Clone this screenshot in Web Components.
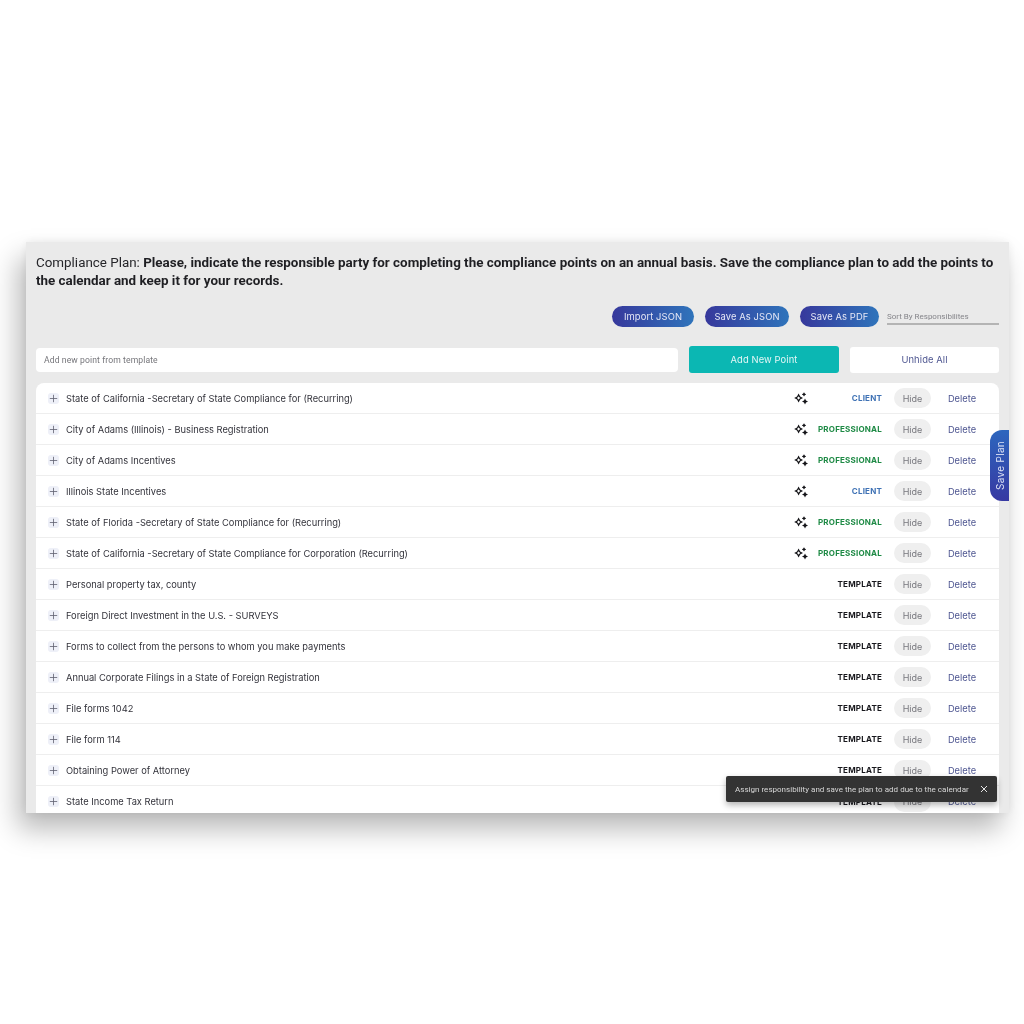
<!DOCTYPE html>
<html lang="en">
<head>
<meta charset="utf-8">
<title>Compliance Plan</title>
<style>
  html, body { margin: 0; background: #fff; }
  body { font-family: "Inter", "Liberation Sans", sans-serif; height: 1024px; overflow: hidden; }
</style>
</head>
<body>
<compliance-plan></compliance-plan>

<script>
"use strict";

(function() {
  const FONT = `"Inter", "Liberation Sans", sans-serif`

  const SPARKLE = `
    <svg width="14" height="14" viewBox="0 0 14 14" aria-hidden="true">
      <path fill-rule="evenodd" fill="#141418" d="M4.6 1.6 L6.2 4.4 L9 6 L6.2 7.6 L4.6 10.4 L3 7.6 L.2 6 L3 4.4 Z M4.6 4.2 L3.9 5.3 L2.8 6 L3.9 6.7 L4.6 7.8 L5.3 6.7 L6.4 6 L5.3 5.3 Z"/>
      <path fill="#141418" d="M10 .2 L10.8 1.6 L12.2 2.4 L10.8 3.2 L10 4.6 L9.2 3.2 L7.8 2.4 L9.2 1.6 Z"/>
      <path fill="#141418" d="M11 6.6 L12 8.6 L14 9.6 L12 10.6 L11 12.6 L10 10.6 L8 9.6 L10 8.6 Z"/>
    </svg>`

  const rowTemplate = document.createElement('template')
  rowTemplate.innerHTML = `
    <style>
      :host { display: flex; align-items: center; height: 31px; box-sizing: border-box; border-bottom: 1px solid #eeeeee; padding: 0 22px 0 12px; font-family: ${FONT}; }
      .plus { width: 11px; height: 11px; border-radius: 3px; background: #eef0f8; display: flex; align-items: center; justify-content: center; margin-right: 7px; flex: none; }
      .title { flex: 1; font-size: 9.3px; color: #33333b; white-space: nowrap; }
      .spark { width: 14px; height: 14px; flex: none; margin: -3px 3px 0 0; }
      .role { width: 71px; padding-right: 1px; text-align: right; font-size: 8px; font-weight: 700; letter-spacing: .2px; white-space: nowrap; }
      .role.client { color: #3f72b5; }
      .role.professional { color: #1e8a45; }
      .role.template { color: #17171c; }
      .hide { width: 37px; height: 20px; border-radius: 10px; background: #efefef; color: #77777d; font-size: 9px; display: flex; align-items: center; justify-content: center; margin-left: 11px; }
      .del { width: 30px; margin-left: 16px; color: #4d5590; font-size: 9.3px; text-align: center; }
    </style>
    <span class="plus"><svg width="9" height="9" viewBox="0 0 9 9"><path d="M4.5 .8V8.2M.8 4.5H8.2" stroke="#5f6170" stroke-width=".8" fill="none"/></svg></span>
    <span class="title"><slot></slot></span>
    <span class="spark"></span>
    <span class="role"></span>
    <span class="hide">Hide</span>
    <span class="del">Delete</span>`
  class PlanRow extends HTMLElement {
    constructor() {
      super()
      this.attachShadow({mode: 'open'})
      this.shadowRoot.appendChild(rowTemplate.content.cloneNode(true))
    }
    connectedCallback() {
      const role = this.getAttribute('role-name') || 'template'
      const el = this.shadowRoot.querySelector('.role')
      el.textContent = role.toUpperCase()
      el.classList.add(role)
      if (this.hasAttribute('ai'))
        this.shadowRoot.querySelector('.spark').innerHTML = SPARKLE
    }
  }
  customElements.define('plan-row', PlanRow)

  const btnTemplate = document.createElement('template')
  btnTemplate.innerHTML = `
    <style>
      :host { display: flex; align-items: center; justify-content: center; height: 21px; border-radius: 11px; background: linear-gradient(90deg, #37389c, #2f74bb); color: #e6e8f6; font-family: ${FONT}; font-size: 9.4px; letter-spacing: .1px; white-space: nowrap; }
    </style>
    <slot></slot>`
  class PillButton extends HTMLElement {
    constructor() {
      super()
      this.attachShadow({mode: 'open'})
      this.shadowRoot.appendChild(btnTemplate.content.cloneNode(true))
    }
  }
  customElements.define('pill-button', PillButton)

  const toastTemplate = document.createElement('template')
  toastTemplate.innerHTML = `
    <style>
      :host { position: absolute; left: 700px; top: 534px; width: 271px; height: 26px; box-sizing: border-box; padding: 0 9px; display: flex; align-items: center; justify-content: space-between; background: #333333; border-radius: 2px; color: #d8d8d8; font: 8px "Roboto", sans-serif; letter-spacing: .02px; box-shadow: 0 3px 6px rgba(0,0,0,.3); white-space: nowrap; }
    </style>
    <span><slot></slot></span>
    <svg width="8" height="8" viewBox="0 0 8 8"><path d="M1 1L7 7M7 1L1 7" stroke="#e4e4e4" stroke-width="1" fill="none"/></svg>`
  class PlanToast extends HTMLElement {
    constructor() {
      super()
      this.attachShadow({mode: 'open'})
      this.shadowRoot.appendChild(toastTemplate.content.cloneNode(true))
    }
  }
  customElements.define('plan-toast', PlanToast)

  const tabTemplate = document.createElement('template')
  tabTemplate.innerHTML = `
    <style>
      :host { position: absolute; right: 0; top: 188px; width: 19px; height: 71px; display: flex; align-items: center; justify-content: center; background: linear-gradient(180deg, #2d66be, #3739a2); border-radius: 12px 0 0 12px; color: #dfe4f6; font-family: ${FONT}; font-size: 10px; letter-spacing: .3px; }
      span { writing-mode: vertical-rl; transform: rotate(180deg); white-space: nowrap; }
    </style>
    <span><slot></slot></span>`
  class SaveTab extends HTMLElement {
    constructor() {
      super()
      this.attachShadow({mode: 'open'})
      this.shadowRoot.appendChild(tabTemplate.content.cloneNode(true))
    }
  }
  customElements.define('save-tab', SaveTab)

  const rows = [
    ['State of California -Secretary of State Compliance for (Recurring)', 'client', true],
    ['City of Adams (Illinois) - Business Registration', 'professional', true],
    ['City of Adams Incentives', 'professional', true],
    ['Illinois State Incentives', 'client', true],
    ['State of Florida -Secretary of State Compliance for (Recurring)', 'professional', true],
    ['State of California -Secretary of State Compliance for Corporation (Recurring)', 'professional', true],
    ['Personal property tax, county', 'template'],
    ['Foreign Direct Investment in the U.S. - SURVEYS', 'template'],
    ['Forms to collect from the persons to whom you make payments', 'template'],
    ['Annual Corporate Filings in a State of Foreign Registration', 'template'],
    ['File forms 1042', 'template'],
    ['File form 114', 'template'],
    ['Obtaining Power of Attorney', 'template'],
    ['State Income Tax Return', 'template']
  ]

  const planTemplate = document.createElement('template')
  planTemplate.innerHTML = `
    <style>
      :host { display: block; position: relative; box-sizing: border-box; width: 983px; height: 571px; margin: 242px 0 0 26px; background: #eaeaea; padding: 12px 10px 0 10px; box-shadow: -8px 16px 26px rgba(0,0,0,.28), 0 0 10px rgba(0,0,0,.07); filter: blur(.3px); }
      h1 { margin: 0; font: 400 13.4px/18px "Roboto", sans-serif; color: #26262a; white-space: nowrap; }
      h1 b { font-weight: 700; color: #1f1f23; }
      .actions { display: flex; align-items: center; margin-top: 16px; height: 21px; padding-left: 576px; }
      pill-button { margin-right: 11px; }
      pill-button:nth-child(1) { width: 82px; }
      pill-button:nth-child(2) { width: 84px; }
      pill-button:nth-child(3) { width: 79px; margin-right: 8px; }
      .sort { width: 112px; height: 16px; flex: none; box-sizing: border-box; border-bottom: 2px solid #b4b4b4; color: #85858a; font: 8px/15px "Roboto", sans-serif; white-space: nowrap; }
      .tools { display: flex; align-items: center; gap: 11px; margin-top: 19px; }
      .search { flex: 1; height: 24px; box-sizing: border-box; background: #fff; border-radius: 4px; padding: 0 8px; display: flex; align-items: center; color: #75757a; font: 8.6px "Roboto", sans-serif; letter-spacing: .1px; }
      .add { width: 150px; height: 27px; border-radius: 3px; background: #0bb7b3; color: #e4f7f6; display: flex; align-items: center; justify-content: center; font-size: 9.4px; letter-spacing: .1px; font-family: ${FONT}; }
      .unhide { width: 149px; height: 26px; border-radius: 3px; background: #fff; color: #4d5590; display: flex; align-items: center; justify-content: center; font-size: 9.4px; letter-spacing: .1px; font-family: ${FONT}; }
      .list { margin-top: 10px; width: 963px; height: 430px; background: #fff; border-radius: 8px 8px 0 0; overflow: hidden; }
      .list plan-row:last-child { border-bottom: 0; }
    </style>
    <h1>Compliance Plan: <b>Please, indicate the responsible party for completing the compliance points on an annual basis. Save the compliance plan to add the points to</b><br><b>the calendar and keep it for your records.</b></h1>
    <div class="actions">
      <pill-button>Import JSON</pill-button>
      <pill-button>Save As JSON</pill-button>
      <pill-button>Save As PDF</pill-button>
      <div class="sort">Sort By Responsibilites</div>
    </div>
    <div class="tools">
      <div class="search">Add new point from template</div>
      <div class="add">Add New Point</div>
      <div class="unhide">Unhide All</div>
    </div>
    <div class="list"></div>
    <save-tab>Save Plan</save-tab>
    <plan-toast>Assign responsibility and save the plan to add due to the calendar</plan-toast>`
  class CompliancePlan extends HTMLElement {
    constructor() {
      super()
      this.attachShadow({mode: 'open'})
      this.shadowRoot.appendChild(planTemplate.content.cloneNode(true))
    }
    connectedCallback() {
      const list = this.shadowRoot.querySelector('.list')
      rows.forEach(([title, role, ai]) => {
        const row = document.createElement('plan-row')
        row.setAttribute('role-name', role)
        if (ai) row.setAttribute('ai', '')
        row.textContent = title
        list.appendChild(row)
      })
    }
  }
  customElements.define('compliance-plan', CompliancePlan)
}).call(this);
</script>
</body>
</html>
